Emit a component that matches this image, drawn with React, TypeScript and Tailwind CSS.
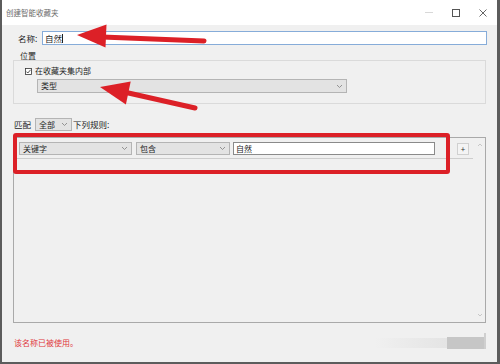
import React from "react";

const Chevron = () => (
  <svg width="7" height="5" viewBox="0 0 7 5" className="shrink-0">
    <polyline points="1,1 3.5,3.5 6,1" fill="none" stroke="#8a8a8a" strokeWidth="0.9" />
  </svg>
);

const Select = ({ label, className }: { label: string; className: string }) => (
  <div className={`flex items-center justify-between bg-[#e3e3e3] border border-[#b4b4b4] pl-[3px] pr-[3px] ${className}`}>
    <span className="leading-none">{label}</span>
    <Chevron />
  </div>
);

const App = () => {
  return (
    <div className="w-[500px] h-[364px] relative overflow-hidden bg-[#f0f0f0] border-l-2 border-r-[3px] border-b-2 border-[#5c5c5c] flex flex-col text-[8px] text-[#1e1e1e] font-['Noto_Sans_CJK_SC','Noto_Sans',sans-serif]">
      {/* Title bar */}
      <div className="h-[25px] shrink-0 bg-white flex items-center pl-[4px] pr-[10px]">
        <span className="text-[#6a6a6a] text-[7.5px] leading-none">创建智能收藏夹</span>
        <div className="ml-auto flex items-center gap-[19px]">
          <div className="w-[8px] h-px bg-[#d8d8d8]" />
          <div className="w-[8px] h-[8px] border border-[#555]" />
          <svg width="8" height="8" viewBox="0 0 8 8">
            <path d="M0.5 0.5 L7.5 7.5 M7.5 0.5 L0.5 7.5" stroke="#555" strokeWidth="0.9" />
          </svg>
        </div>
      </div>

      <div className="flex-1 flex flex-col pl-[11px] pr-[11px]">
        {/* Name */}
        <div className="mt-[6px] h-[14px] flex items-center">
          <span className="pl-[5px] w-[29px] shrink-0 text-[8.5px] leading-none">名称:</span>
          <div className="flex-1 h-[14px] mr-[-1px] bg-white border border-[#86acd9] flex items-center pl-[2px] text-[8.5px]">
            自然<span className="w-px h-[9px] bg-[#222]" />
          </div>
        </div>

        {/* Location group */}
        <div className="mt-[7px] pl-[7px] h-[7px] flex items-center text-[8px] leading-none">位置</div>
        <div className="mt-[1px] border border-[#dadada] pt-[6px] pb-[10px]">
          <div className="flex items-center ml-[11px] h-[8px]">
            <svg width="7" height="7" viewBox="0 0 7 7" className="shrink-0">
              <rect x="0.5" y="0.5" width="6" height="6" fill="white" stroke="#333" strokeWidth="0.8" />
              <polyline points="1.4,3.6 2.8,5 5.6,1.8" fill="none" stroke="#222" strokeWidth="0.8" />
            </svg>
            <span className="ml-[3px] leading-none">在收藏夹集内部</span>
          </div>
          <Select label="类型" className="mt-[4px] ml-[23px] w-[310px] h-[14px]" />
        </div>

        {/* Match row */}
        <div className="mt-[14px] h-[13px] flex items-center">
          <span className="ml-[1px] w-[21px] text-[8.5px] leading-none">匹配</span>
          <Select label="全部" className="w-[37px] h-[13px]" />
          <span className="ml-[1px] text-[8.5px] leading-none">下列规则:</span>
        </div>

        {/* Rules panel */}
        <div className="mt-[6px] h-[186px] border border-[#a9a9a9] flex">
          <div className="flex-1 flex flex-col">
            <div className="flex items-center pt-[4px] pl-[5px] h-[17px]">
              <Select label="关键字" className="w-[113px] h-[13px]" />
              <Select label="包含" className="ml-[4px] w-[94px] h-[13px]" />
              <div className="ml-[3px] w-[202px] h-[13px] bg-white border border-[#8a8a8a] flex items-center pl-[2px]">自然</div>
              <div className="ml-[22px] w-[12px] h-[12px] border border-[#d0d0d0] bg-[#f4f4f4] flex items-center justify-center text-[8px] leading-none text-[#333]">+</div>
            </div>
            <div className="mt-[3px] mx-px border-b border-[#cdcdcd]" />
          </div>
          <div className="w-[11px] flex flex-col items-center justify-between py-[5px]">
            <svg width="6" height="4" viewBox="0 0 6 4">
              <polyline points="1,3 3,1 5,3" fill="none" stroke="#bdbdbd" strokeWidth="0.8" />
            </svg>
            <svg width="6" height="4" viewBox="0 0 6 4">
              <polyline points="1,1 3,3 5,1" fill="none" stroke="#bdbdbd" strokeWidth="0.8" />
            </svg>
          </div>
        </div>

        {/* Footer */}
        <div className="flex-1 flex items-center justify-between">
          <span className="ml-px text-[#e0383c] text-[8px] leading-none">该名称已被使用。</span>
          <div className="flex items-center">
            <div className="w-[72px] h-[10px] bg-gradient-to-r from-[#f0f0f0] to-[#e4e4e4]" />
            <div className="w-[37px] h-[12px] bg-[#c6c6c6]" />
            <div className="w-[2px] h-[16px] mb-[4px] bg-[#cfcfcf]" />
          </div>
        </div>
      </div>

      {/* Annotations */}
      <div className="absolute left-[11px] top-[133px] w-[437px] h-[41px] border-[4px] border-[#dc2027] rounded-[3px]" />
      <svg className="absolute left-0 top-0 pointer-events-none" width="500" height="364" viewBox="0 0 500 364">
        <line x1="100" y1="37" x2="202" y2="41" stroke="#dc2027" strokeWidth="5" strokeLinecap="round" />
        <polygon points="75,35 104.5,24.5 103.5,47.5" fill="#dc2027" />
        <line x1="122" y1="92" x2="193" y2="108" stroke="#dc2027" strokeWidth="5" strokeLinecap="round" />
        <polygon points="98,87 128.7,81.5 123.9,104.5" fill="#dc2027" />
      </svg>
    </div>
  );
};

export default App;
